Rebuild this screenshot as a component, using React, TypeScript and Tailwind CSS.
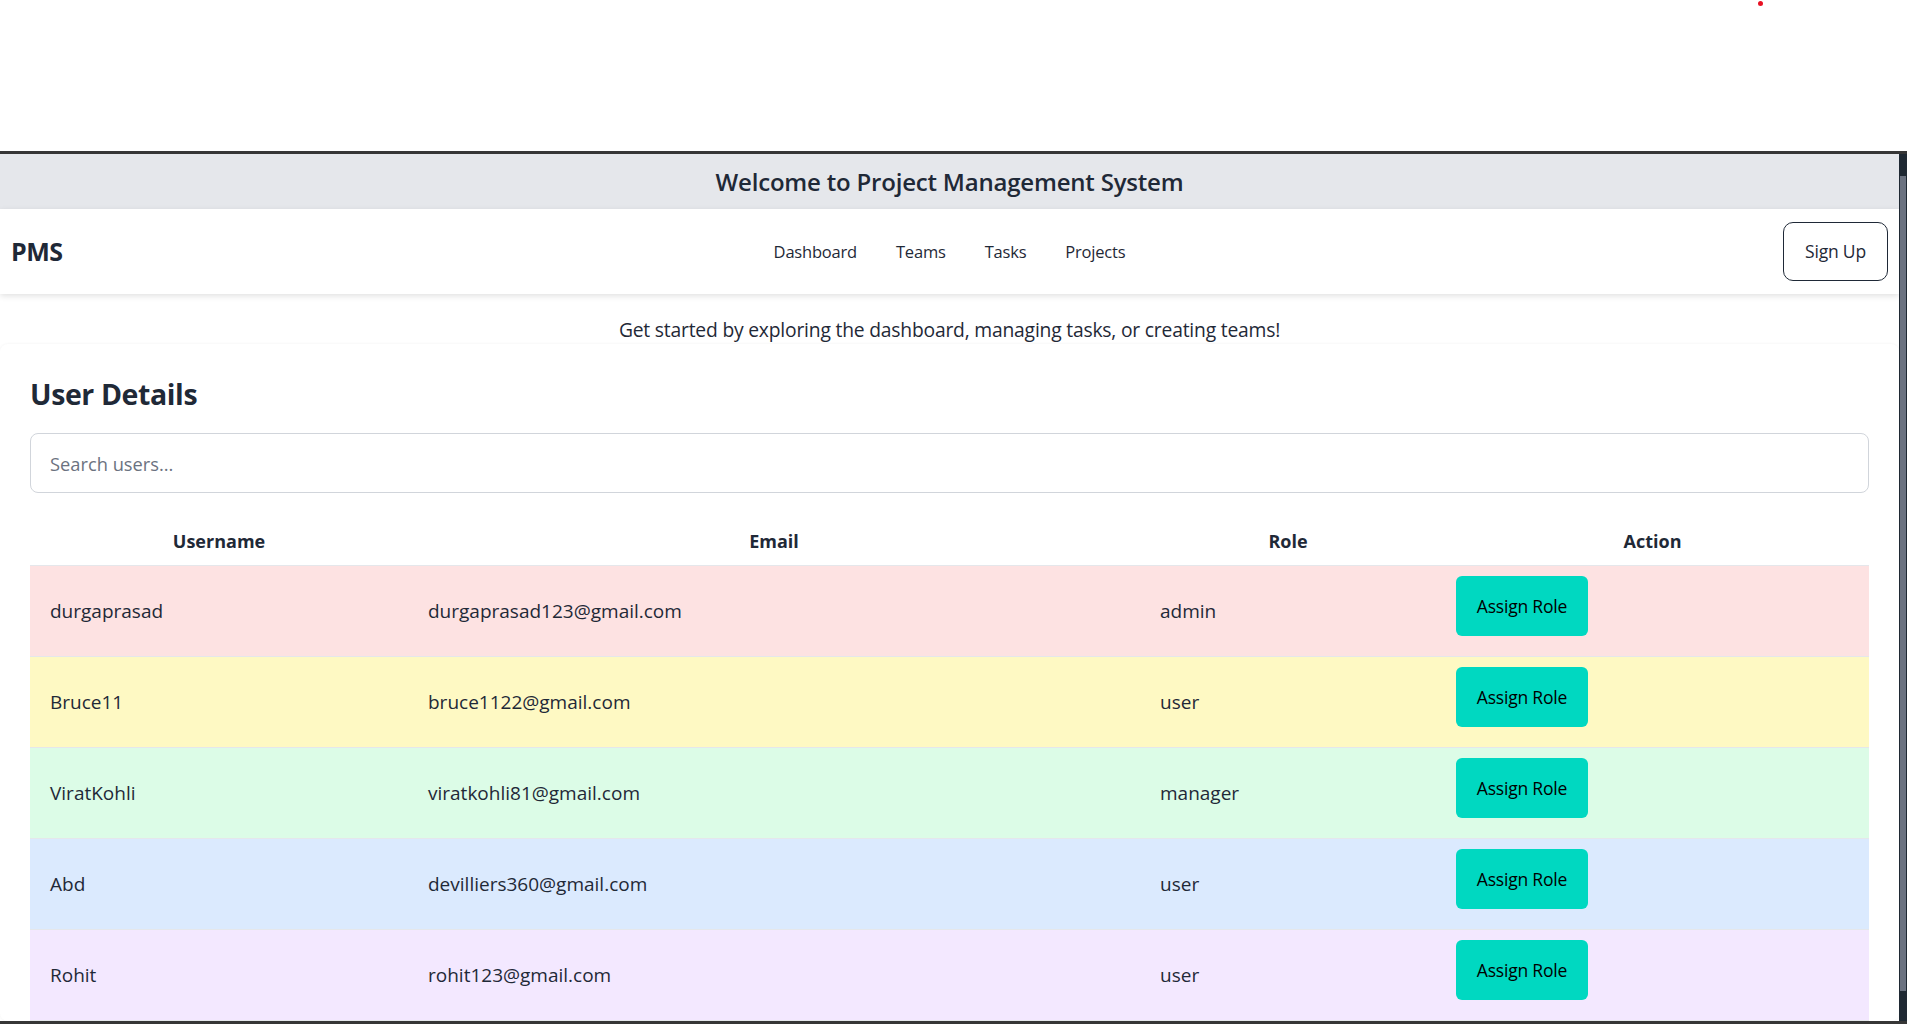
import React from "react";

const users = [
  { name: "durgaprasad", email: "durgaprasad123@gmail.com", role: "admin", bg: "bg-[#fde2e2]" },
  { name: "Bruce11", email: "bruce1122@gmail.com", role: "user", bg: "bg-[#fef9c3]" },
  { name: "ViratKohli", email: "viratkohli81@gmail.com", role: "manager", bg: "bg-[#dcfce7]" },
  { name: "Abd", email: "devilliers360@gmail.com", role: "user", bg: "bg-[#dbeafe]" },
  { name: "Rohit", email: "rohit123@gmail.com", role: "user", bg: "bg-[#f3e8ff]" },
];

export default function App() {
  return (
    <div
      className="relative w-[1907px] h-[1024px] overflow-hidden bg-white text-[#1f2937]"
      style={{ fontFamily: '"Open Sans", "Noto Sans", sans-serif' }}
    >
      <div className="h-[151px] relative">
        <span className="absolute left-[1758px] top-[1px] w-[5px] h-[5px] rounded-full bg-[#e81123]" />
      </div>
      <div className="h-[873px] flex border-t-[3px] border-b-[3px] border-[#363636]">
        <div className="flex-1 min-w-0 overflow-hidden bg-white">
          <div className="h-[55px] bg-[#e5e7eb] flex items-center justify-center">
            <h1 className="text-[24px] font-semibold tracking-[-0.2px]">Welcome to Project Management System</h1>
          </div>
          <nav className="h-[85px] grid grid-cols-3 items-center px-[11px] bg-white shadow-[0_2px_6px_rgba(0,0,0,0.12)] relative z-10">
            <div className="text-[25px] font-bold tracking-[-0.5px] justify-self-start">PMS</div>
            <div className="flex items-center gap-[39px] justify-self-center text-[16.5px] tracking-[-0.2px] pt-[2px]">
              <a>Dashboard</a>
              <a>Teams</a>
              <a>Tasks</a>
              <a>Projects</a>
            </div>
            <button className="justify-self-end w-[105px] h-[59px] border border-[#1f2937] rounded-[10px] text-[17.5px] font-medium tracking-[-0.2px]">
              Sign Up
            </button>
          </nav>
          <p className="mt-[22px] text-center text-[19.3px] leading-[28px] tracking-[-0.2px]">
            Get started by exploring the dashboard, managing tasks, or creating teams!
          </p>
          <section className="rounded-lg shadow-[0_0_3px_rgba(0,0,0,0.06)] px-[30px] pt-[32px]">
            <h2 className="text-[28.5px] leading-[36px] font-bold tracking-[-0.4px]">User Details</h2>
            <input
              placeholder="Search users..."
              className="mt-[21px] w-full h-[60px] border border-[#d1d5db] rounded-lg px-[19px] text-[18.3px] placeholder:text-[#6b7280] outline-none"
            />
            <table className="mt-[21px] w-full border-collapse text-[19px]">
              <thead>
                <tr className="border-b border-[#e5e7eb]">
                  <th className="w-[378px] h-[51px] pt-[4px] text-center font-bold text-[18px]">Username</th>
                  <th className="w-[732px] pt-[4px] text-center font-bold text-[18px]">Email</th>
                  <th className="w-[296px] pt-[4px] text-center font-bold text-[18px]">Role</th>
                  <th className="pt-[4px] text-center font-bold text-[18px]">Action</th>
                </tr>
              </thead>
              <tbody>
                {users.map((u) => (
                  <tr key={u.name} className={`${u.bg} border-b border-[#e5e7eb]`}>
                    <td className="h-[91px] px-[20px] pt-[2px] align-middle">{u.name}</td>
                    <td className="px-[20px] pt-[2px] align-middle">{u.email}</td>
                    <td className="px-[20px] pt-[2px] align-middle">{u.role}</td>
                    <td className="px-[20px] align-middle">
                      <button className="block mb-[9px] w-[132px] h-[60px] rounded-md bg-[#00d8c1] text-black text-[17.5px] font-medium tracking-[-0.2px]">
                        Assign Role
                      </button>
                    </td>
                  </tr>
                ))}
              </tbody>
            </table>
          </section>
        </div>
        <div className="w-[8px] bg-[#1f2933] flex flex-col">
          <div className="h-[22px]" />
          <div className="flex-1 bg-[#6b7280] mx-[1px] mb-[30px]" />
        </div>
      </div>
    </div>
  );
}
